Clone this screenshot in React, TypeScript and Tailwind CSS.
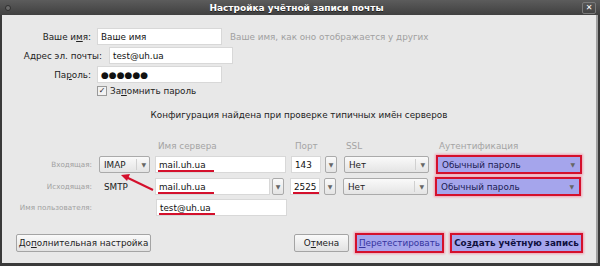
const font = "font-['DejaVu_Sans','Liberation_Sans',sans-serif]"

function Arrow() {
  return <span className="text-[6px] leading-none text-[#666]">▼</span>
}

function Select({ value, className, hi }: { value: string; className: string; hi?: boolean }) {
  if (hi) {
    return (
      <div className={`${className} h-[19px] border-2 border-[#d4102c] shadow-[0_0_2px_1px_#f0a0b0] bg-[#a5a5ec] flex items-center justify-between pl-[4px] pr-[5px] text-[#1a1a50]`}>
        <span>{value}</span>
        <Arrow />
      </div>
    )
  }
  return (
    <div className={`${className} h-[17px] border border-[#aaaaaa] rounded-[2px] bg-gradient-to-b from-[#fafafa] to-[#e4e4e4] flex items-center justify-between pl-[4px] pr-[3px] text-[#222]`}>
      <span>{value}</span>
      <span className="flex items-center border-l border-[#d0d0d0] h-[11px] pl-[4px]">
        <Arrow />
      </span>
    </div>
  )
}

function DropBtn() {
  return (
    <div className="w-[12px] h-[17px] border border-[#aaaaaa] rounded-[2px] bg-gradient-to-b from-[#fafafa] to-[#e4e4e4] flex items-center justify-center">
      <Arrow />
    </div>
  )
}

function Input({ value, className, mark }: { value: string; className: string; mark?: string }) {
  return (
    <div className={`${className} h-[17px] bg-white border border-[#d8d8d8] flex items-center pl-[3px] text-[#111]`}>
      <span className="relative">
        {value}
        {mark && <span className={`absolute left-[-1px] top-[11px] h-[2px] bg-[#d4102c] ${mark}`} />}
      </span>
    </div>
  )
}

export default function App() {
  return (
    <div className={`${font} relative w-[600px] h-[266px] bg-[#3a3a3a] flex flex-col text-[8.8px] leading-[12px] overflow-hidden`}>
      {/* title bar */}
      <div className="h-[15px] bg-gradient-to-b from-[#5c5c5c] to-[#404040] flex items-center pl-[5px] pr-[4px]">
        <span className="w-[6px] h-[6px] rounded-full bg-[#6a6a6a] border border-[#2e2e2e]" />
        <span className="flex-1 text-center text-white font-bold text-[9px] [text-shadow:0_1px_0_#222]">
          Настройка учётной записи почты
        </span>
        <span className="w-[14px] h-[12px] border border-[#7a7a7a] rounded-[2px] text-white text-[8px] font-bold flex items-center justify-center">✕</span>
      </div>

      {/* body */}
      <div className="flex-1 mx-[2px] mb-[3px] bg-[#e8e8e8] border-r-[2px] border-[#a0a0a0] flex flex-col">
        <div className="pt-[13px] flex flex-col gap-[2px] text-[#222]">
          <div className="flex items-center">
            <span className="w-[89px] text-right">Ваше и<u>м</u>я:</span>
            <Input value="Ваше имя" className="ml-[6px] w-[125px]" />
            <span className="ml-[8px] text-[#a0a0a0]">Ваше имя, как оно отображается у других</span>
          </div>
          <div className="flex items-center">
            <span className="w-[100px] text-right">Адрес эл. почты:</span>
            <Input value="test@uh.ua" className="ml-[7px] w-[124px]" />
          </div>
          <div className="flex items-center">
            <span className="w-[89px] text-right">Па<u>р</u>оль:</span>
            <Input value="●●●●●●" className="ml-[6px] w-[125px] text-[9px]" />
          </div>
          <div className="flex items-center ml-[95px] gap-[3px]">
            <span className="w-[10px] h-[10px] border border-[#999] bg-[#f2f2f2] text-[8px] leading-none flex items-center justify-center">✓</span>
            <span>За<u>п</u>омнить пароль</span>
          </div>
        </div>

        <div className="mt-[12px] text-center text-[#222]">Конфигурация найдена при проверке типичных имён серверов</div>

        {/* server table */}
        <div className="mt-[19px] flex flex-col">
          <div className="flex text-[#a4a4a4] h-[12px] items-center">
            <span className="ml-[156px] w-[137px]">Имя сервера</span>
            <span className="w-[51px]">Порт</span>
            <span className="w-[93px]">SSL</span>
            <span>Аутентификация</span>
          </div>
          <div className="flex items-center h-[19px] mt-[3px]">
            <span className="w-[90px] text-right text-[7.2px] text-[#a0a0a0]">Входящая:</span>
            <Select value="IMAP" className="ml-[7px] w-[51px]" />
            <Input value="mail.uh.ua" className="ml-[5px] w-[131px]" mark="w-[56px]" />
            <Input value="143" className="ml-[5px] w-[30px]" />
            <div className="ml-[4px]"><DropBtn /></div>
            <Select value="Нет" className="ml-[7px] w-[85px]" />
            <Select value="Обычный пароль" className="ml-[7px] w-[146px]" hi />
          </div>
          <div className="flex items-center h-[19px] mt-[3px]">
            <span className="w-[90px] text-right text-[7.2px] text-[#a0a0a0]">Исходящая:</span>
            <span className="ml-[12px] w-[51px] text-[#222]">SMTP</span>
            <Input value="mail.uh.ua" className="w-[115px]" mark="w-[56px]" />
            <div className="ml-[2px]"><DropBtn /></div>
            <Input value="2525" className="ml-[6px] w-[30px]" mark="w-[26px]" />
            <div className="ml-[4px]"><DropBtn /></div>
            <Select value="Нет" className="ml-[7px] w-[85px]" />
            <Select value="Обычный пароль" className="ml-[7px] w-[146px]" hi />
          </div>
          <div className="flex items-center h-[19px] mt-[2px]">
            <span className="w-[90px] text-right text-[7.2px] text-[#a0a0a0]">Имя пользователя:</span>
            <Input value="test@uh.ua" className="ml-[64px] w-[131px]" mark="w-[56px]" />
          </div>
        </div>

        {/* buttons */}
        <div className="mt-auto mb-[10px] flex items-center pl-[14px] pr-[13px] text-[#222]">
          <div className="h-[18px] w-[135px] border border-[#a4a4a4] rounded-[2px] bg-gradient-to-b from-[#fafafa] to-[#e2e2e2] flex items-center justify-center">
            До<u>п</u>олнительная настройка
          </div>
          <div className="ml-auto h-[18px] w-[55px] border border-[#a4a4a4] rounded-[2px] bg-gradient-to-b from-[#fafafa] to-[#e2e2e2] flex items-center justify-center">
            О<u>т</u>мена
          </div>
          <div className="ml-[6px] h-[20px] w-[89px] border-2 border-[#d4102c] shadow-[0_0_2px_1px_#f0a0b0] bg-[#a5a5ec] flex items-center justify-center text-[#3434a0]">
            <u>П</u>еретестировать
          </div>
          <div className="ml-[6px] h-[20px] w-[133px] border-2 border-[#d4102c] shadow-[0_0_2px_1px_#f0a0b0] bg-[#a5a5ec] flex items-center justify-center font-bold text-[#101040]">
            Со<u>з</u>дать учётную запись
          </div>
        </div>
      </div>

      {/* red arrow */}
      <svg className="absolute left-[118px] top-[172px]" width="38" height="20" viewBox="0 0 38 20">
        <line x1="35" y1="18" x2="8" y2="5" stroke="#d4102c" strokeWidth="2" />
        <polygon points="3,3 12,2 9,9" fill="#d4102c" />
      </svg>
    </div>
  )
}
